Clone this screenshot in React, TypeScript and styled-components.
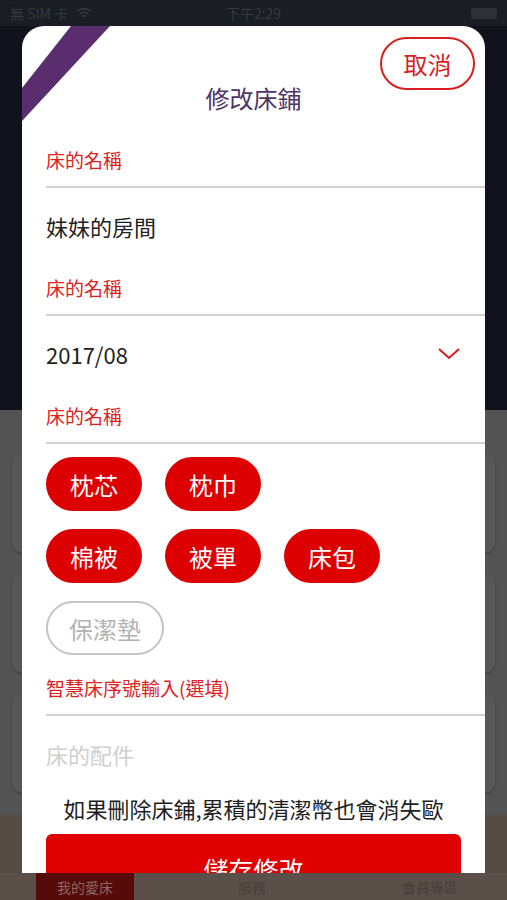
import styled, { createGlobalStyle } from 'styled-components';

const GlobalStyle = createGlobalStyle`
  html, body {
    margin: 0;
    padding: 0;
  }
  body {
    width: 507px;
    height: 900px;
    overflow: hidden;
    background: #10131b;
    font-family: "Noto Sans CJK TC", "Noto Sans", sans-serif;
  }
  * {
    box-sizing: border-box;
  }
`;

const Screen = styled.div`
  position: relative;
  width: 507px;
  height: 900px;
  display: flex;
  flex-direction: column;
  overflow: hidden;
`;

const StatusBar = styled.div`
  height: 26px;
  flex-shrink: 0;
  display: grid;
  grid-template-columns: 1fr auto 1fr;
  align-items: center;
  padding: 0 10px;
  background: #1a1d24;
  color: #363940;
  font-size: 14px;
`;

const StatusLeft = styled.div`
  display: flex;
  align-items: center;
  gap: 8px;
`;

const StatusRight = styled.div`
  display: flex;
  justify-content: flex-end;
`;

const Battery = styled.div`
  width: 26px;
  height: 11px;
  border-radius: 2px;
  background: #2e3138;
`;

const Hero = styled.div`
  height: 384px;
  flex-shrink: 0;
  background: #10131b;
`;

const CardList = styled.div`
  flex: 1;
  display: flex;
  flex-direction: column;
  gap: 20px;
  padding: 43px 12px 0;
  background: #535353;
  overflow: hidden;
`;

const BgCard = styled.div`
  height: 100px;
  flex-shrink: 0;
  border-radius: 10px;
  background: #575757;
  box-shadow: 0 1px 2px rgba(0, 0, 0, 0.3);
`;

const Banner = styled.div`
  height: 58px;
  flex-shrink: 0;
  background: #564b44;
`;

const TabBar = styled.div`
  height: 27px;
  flex-shrink: 0;
  display: grid;
  grid-template-columns: 98px 236px 1fr;
  padding: 0 17px 0 36px;
  background: #5a5049;
  font-size: 14px;
`;

const Tab = styled.div<{ $active?: boolean }>`
  display: flex;
  align-items: center;
  justify-content: center;
  background: ${(p) => (p.$active ? '#560b08' : 'transparent')};
  color: ${(p) => (p.$active ? '#8a6762' : '#463f3a')};
`;

const Modal = styled.div`
  position: absolute;
  left: 22px;
  top: 26px;
  width: 463px;
  height: 847px;
  background: #fff;
  border-radius: 22px 22px 0 0;
  overflow: hidden;
`;

const Ribbon = styled.svg`
  position: absolute;
  left: 0;
  top: 0;
`;

const Header = styled.div`
  display: grid;
  min-height: 87px;
  padding: 11px 10px 0 0;
`;

const CancelButton = styled.button`
  grid-area: 1 / 1;
  justify-self: end;
  align-self: start;
  width: 95px;
  height: 53px;
  border: 2px solid #d81e1e;
  border-radius: 27px;
  background: #fff;
  color: #d81e1e;
  font-family: inherit;
  font-size: 24px;
  line-height: 1;
  padding: 0;
`;

const Title = styled.h1`
  grid-area: 1 / 1;
  justify-self: center;
  align-self: end;
  margin: 0 0 0 10px;
  font-size: 24px;
  font-weight: 400;
  line-height: 30px;
  color: #4d3567;
`;

const Form = styled.div`
  padding: 34px 0 0 24px;
`;

const FieldLabel = styled.div<{ $gap?: number }>`
  margin-top: ${(p) => p.$gap ?? 0}px;
  padding-bottom: 13px;
  border-bottom: 2px solid #d2d2d2;
  font-size: 19px;
  line-height: 26px;
  color: #e02020;
`;

const FieldValue = styled.div<{ $muted?: boolean; $short?: boolean }>`
  display: flex;
  align-items: center;
  justify-content: space-between;
  padding: 23px 25px ${(p) => (p.$short ? 0 : 34)}px 0;
  font-size: 22px;
  line-height: 30px;
  color: ${(p) => (p.$muted ? '#cfcfcf' : '#222')};
`;

const ChipArea = styled.div`
  display: flex;
  flex-direction: column;
  gap: 18px;
  margin-top: 13px;
`;

const ChipRow = styled.div`
  display: flex;
  gap: 23px;
`;

const Chip = styled.div<{ $off?: boolean }>`
  height: 54px;
  display: flex;
  align-items: center;
  padding: 0 ${(p) => (p.$off ? 21 : 24)}px;
  border-radius: 27px;
  border: ${(p) => (p.$off ? '2px solid #c4c4c4' : 'none')};
  background: ${(p) => (p.$off ? '#fff' : '#dc0000')};
  color: ${(p) => (p.$off ? '#b3b3b3' : '#fff')};
  font-size: 24px;
`;

const Notice = styled.p`
  margin: 24px 24px 0 0;
  text-align: center;
  font-size: 22px;
  line-height: 30px;
  color: #1e1e1e;
`;

const SaveButton = styled.button`
  display: block;
  width: 415px;
  height: 70px;
  margin-top: 11px;
  border: none;
  border-radius: 6px;
  background: #e00000;
  color: #fff;
  font-family: inherit;
  font-size: 25px;
  padding: 0;
`;

const chipRows: { name: string; on: boolean }[][] = [
  [
    { name: '枕芯', on: true },
    { name: '枕巾', on: true },
  ],
  [
    { name: '棉被', on: true },
    { name: '被單', on: true },
    { name: '床包', on: true },
  ],
  [{ name: '保潔墊', on: false }],
];

function Wifi() {
  return (
    <svg width="16" height="12" viewBox="0 0 16 12">
      <path d="M1 4.5a10 10 0 0 1 14 0M3.5 7a6.5 6.5 0 0 1 9 0M6 9.5a3 3 0 0 1 4 0" stroke="#363940" strokeWidth="1.6" fill="none" />
    </svg>
  );
}

function Chevron() {
  return (
    <svg width="22" height="12" viewBox="0 0 22 12">
      <polyline points="1,1 11,10 21,1" fill="none" stroke="#d71920" strokeWidth="2" />
    </svg>
  );
}

export default function App() {
  return (
    <Screen>
      <GlobalStyle />
      <StatusBar>
        <StatusLeft>
          <span>無 SIM 卡</span>
          <Wifi />
        </StatusLeft>
        <span>下午2:29</span>
        <StatusRight>
          <Battery />
        </StatusRight>
      </StatusBar>
      <Hero />
      <CardList>
        <BgCard />
        <BgCard />
        <BgCard />
      </CardList>
      <Banner />
      <TabBar>
        <Tab $active>我的愛床</Tab>
        <Tab>服務</Tab>
        <Tab>會員專區</Tab>
      </TabBar>

      <Modal>
        <Ribbon width="100" height="100" viewBox="0 0 100 100">
          <polygon points="49,0 88,0 0,95 0,62" fill="#5a2e6e" />
        </Ribbon>
        <Header>
          <CancelButton>取消</CancelButton>
          <Title>修改床鋪</Title>
        </Header>
        <Form>
          <FieldLabel>床的名稱</FieldLabel>
          <FieldValue>妹妹的房間</FieldValue>
          <FieldLabel>床的名稱</FieldLabel>
          <FieldValue>
            2017/08
            <Chevron />
          </FieldValue>
          <FieldLabel>床的名稱</FieldLabel>
          <ChipArea>
            {chipRows.map((row, i) => (
              <ChipRow key={i}>
                {row.map((c) => (
                  <Chip key={c.name} $off={!c.on}>
                    {c.name}
                  </Chip>
                ))}
              </ChipRow>
            ))}
          </ChipArea>
          <FieldLabel $gap={20}>智慧床序號輸入(選填)</FieldLabel>
          <FieldValue $muted $short>
            床的配件
          </FieldValue>
          <Notice>如果刪除床鋪,累積的清潔幣也會消失歐</Notice>
          <SaveButton>儲存修改</SaveButton>
        </Form>
      </Modal>
    </Screen>
  );
}
